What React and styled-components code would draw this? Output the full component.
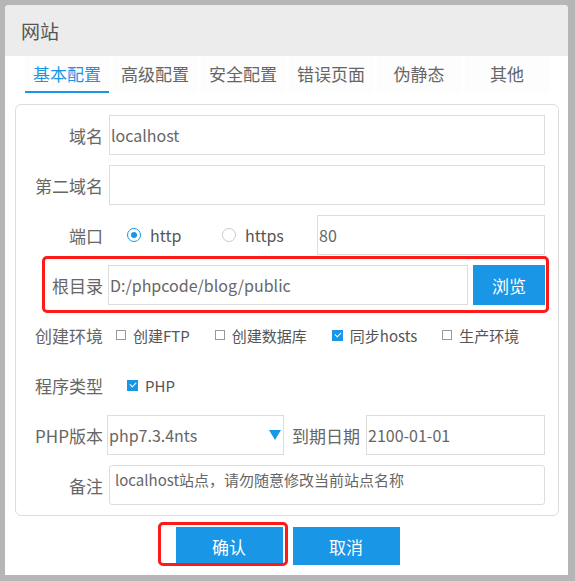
import React from "react";
import styled, { createGlobalStyle } from "styled-components";

const GlobalStyle = createGlobalStyle`
  html, body {
    margin: 0;
    padding: 0;
    background: #b6b6b6;
  }
  body {
    font-family: "Noto Sans CJK SC", "Noto Sans", sans-serif;
    color: #666;
  }
  * {
    box-sizing: border-box;
  }
`;

const BLUE = "#1a96e6";

const tabs = ["基本配置", "高级配置", "安全配置", "错误页面", "伪静态", "其他"];

const envOptions = [
  { label: "创建FTP", checked: false },
  { label: "创建数据库", checked: false },
  { label: "同步hosts", checked: true },
  { label: "生产环境", checked: false },
];

export default function App() {
  return (
    <>
      <GlobalStyle />
      <Dialog>
        <Header>网站</Header>
        <Tabs>
          {tabs.map((t, i) => (
            <Tab key={t} active={i === 0}>
              {t}
            </Tab>
          ))}
        </Tabs>
        <Panel>
          <Row>
            <Label>域名</Label>
            <Input defaultValue="localhost" />
          </Row>
          <Row>
            <Label>第二域名</Label>
            <Input defaultValue="" />
          </Row>
          <Row>
            <Label>端口</Label>
            <RadioGroup>
              <RadioItem>
                <Radio checked />
                http
              </RadioItem>
              <RadioItem>
                <Radio />
                https
              </RadioItem>
            </RadioGroup>
            <Input defaultValue="80" />
          </Row>
          <Row marked>
            <Label>根目录</Label>
            <Input defaultValue="D:/phpcode/blog/public" tight />
            <BrowseButton>浏览</BrowseButton>
          </Row>
          <Row>
            <Label>创建环境</Label>
            <CheckGroup>
              {envOptions.map((o) => (
                <CheckItem key={o.label}>
                  <Check checked={o.checked} />
                  {o.label}
                </CheckItem>
              ))}
            </CheckGroup>
          </Row>
          <Row>
            <Label>程序类型</Label>
            <CheckGroup indent>
              <CheckItem>
                <Check checked />
                PHP
              </CheckItem>
            </CheckGroup>
          </Row>
          <Row>
            <Label>PHP版本</Label>
            <Select>
              php7.3.4nts
              <Arrow viewBox="0 0 12 10">
                <path d="M0 0 H12 L6 10 Z" fill={BLUE} />
              </Arrow>
            </Select>
            <InlineLabel>到期日期</InlineLabel>
            <Input defaultValue="2100-01-01" />
          </Row>
          <Row>
            <Label>备注</Label>
            <Note defaultValue="localhost站点，请勿随意修改当前站点名称" />
          </Row>
        </Panel>
        <Footer>
          <FooterButton marked>确认</FooterButton>
          <FooterButton>取消</FooterButton>
        </Footer>
      </Dialog>
    </>
  );
}

const Dialog = styled.div`
  margin: 5px 0 0 5px;
  width: 563px;
  height: 570px;
  background: #fff;
  border-radius: 4px 4px 0 0;
  display: flex;
  flex-direction: column;
`;

const Header = styled.div`
  height: 51px;
  background: #ececec;
  border-radius: 4px 4px 0 0;
  padding-left: 16px;
  display: flex;
  align-items: center;
  font-size: 19px;
  color: #555;
`;

const Tabs = styled.div`
  display: flex;
  height: 37px;
  padding-left: 20px;
`;

const Tab = styled.div`
  width: 84px;
  margin-right: 4px;
  display: flex;
  align-items: center;
  justify-content: center;
  font-size: 17px;
  background: #fdfdfd;
  color: ${(p) => (p.active ? BLUE : "#666")};
  border-bottom: 2px solid ${(p) => (p.active ? BLUE : "transparent")};
`;

const Panel = styled.div`
  margin: 11px 9px 0 10px;
  border: 1px solid #ddd;
  border-radius: 6px;
  padding: 10px 13px 10px 0;
  display: flex;
  flex-direction: column;
  gap: 10px;
`;

const Row = styled.div`
  position: relative;
  display: flex;
  align-items: center;
  height: 40px;
  &::after {
    content: "";
    display: ${(p) => (p.marked ? "block" : "none")};
    position: absolute;
    left: 26px;
    right: -4px;
    top: -9px;
    bottom: -8px;
    border: 3px solid #ff1a1a;
    border-radius: 5px;
    pointer-events: none;
  }
`;

const Label = styled.div`
  width: 87px;
  flex-shrink: 0;
  margin-right: 6px;
  text-align: right;
  font-size: 17px;
  color: #666;
  white-space: nowrap;
`;

const InlineLabel = styled.div`
  flex-shrink: 0;
  padding: 0 6px 0 8px;
  font-size: 17px;
  color: #666;
`;

const Input = styled.input`
  flex: 1;
  min-width: 0;
  height: 40px;
  margin-left: ${(p) => (p.tight ? "-1px" : "0")};
  border: 1px solid #ddd;
  padding: 0 1px;
  font-family: inherit;
  font-size: 16px;
  color: #666;
  outline: none;
  background: #fff;
`;

const RadioGroup = styled.div`
  display: flex;
  align-items: center;
  flex-shrink: 0;
  margin-left: 18px;
`;

const RadioItem = styled.label`
  width: 95px;
  display: flex;
  align-items: center;
  gap: 9px;
  font-size: 16px;
  color: #555;
`;

const Radio = styled.span`
  width: 14px;
  height: 14px;
  border-radius: 50%;
  border: 1px solid ${(p) => (p.checked ? BLUE : "#ccc")};
  display: flex;
  align-items: center;
  justify-content: center;
  &::after {
    content: "";
    width: 6px;
    height: 6px;
    border-radius: 50%;
    background: ${(p) => (p.checked ? BLUE : "transparent")};
  }
`;

const CheckGroup = styled.div`
  display: flex;
  align-items: center;
  flex-shrink: 0;
  margin-left: ${(p) => (p.indent ? "18px" : "7px")};
`;

const CheckItem = styled.label`
  display: flex;
  align-items: center;
  flex-shrink: 0;
  gap: 7px;
  margin-right: 25px;
  font-size: 15px;
  color: #555;
  white-space: nowrap;
`;

const Check = styled.span`
  flex-shrink: 0;
  width: ${(p) => (p.checked ? "11px" : "10px")};
  height: ${(p) => (p.checked ? "11px" : "10px")};
  border: 1px solid ${(p) => (p.checked ? BLUE : "#999")};
  background: ${(p) => (p.checked ? BLUE : "#fff")};
  position: relative;
  &::after {
    content: "";
    display: ${(p) => (p.checked ? "block" : "none")};
    position: absolute;
    left: 2px;
    top: 1px;
    width: 5px;
    height: 3px;
    border-left: 1.5px solid #fff;
    border-bottom: 1.5px solid #fff;
    transform: rotate(-45deg);
  }
`;

const BrowseButton = styled.button`
  width: 72px;
  height: 40px;
  margin-left: 5px;
  border: none;
  background: ${BLUE};
  color: #fff;
  font-family: inherit;
  font-size: 17px;
`;

const Select = styled.div`
  width: 177px;
  flex-shrink: 0;
  height: 40px;
  margin-left: -2px;
  border: 1px solid #ddd;
  padding: 0 2px 0 1px;
  display: flex;
  align-items: center;
  justify-content: space-between;
  font-size: 16px;
  color: #666;
`;

const Arrow = styled.svg`
  width: 12px;
  height: 10px;
`;

const Note = styled.textarea`
  flex: 1;
  height: 40px;
  border: 1px solid #ddd;
  border-radius: 3px;
  padding: 3px 5px;
  resize: none;
  font-family: inherit;
  font-size: 15px;
  color: #666;
  outline: none;
`;

const Footer = styled.div`
  display: flex;
  justify-content: center;
  gap: 10px;
  padding-top: 11px;
  padding-left: 2px;
`;

const FooterButton = styled.button`
  position: relative;
  width: 107px;
  height: 38px;
  border: none;
  background: ${BLUE};
  color: #fff;
  font-family: inherit;
  font-size: 17px;
  &::after {
    content: "";
    display: ${(p) => (p.marked ? "block" : "none")};
    position: absolute;
    left: -18px;
    right: -5px;
    top: -5px;
    bottom: -1px;
    border: 3px solid #ff1a1a;
    border-radius: 5px;
    pointer-events: none;
  }
`;
